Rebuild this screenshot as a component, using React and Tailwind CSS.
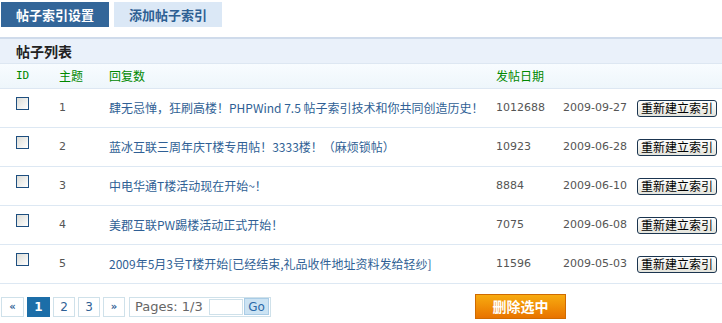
import React from "react";

const rows = [
  { id: 1, title: "肆无忌惮，狂刷高楼！PHPWind 7.5 帖子索引技术和你共同创造历史！", replies: "1012688", date: "2009-09-27" },
  { id: 2, title: "蓝冰互联三周年庆T楼专用帖！3333楼！（麻烦锁帖）", replies: "10923", date: "2009-06-28" },
  { id: 3, title: "中电华通T楼活动现在开始~！", replies: "8884", date: "2009-06-10" },
  { id: 4, title: "美郡互联PW踢楼活动正式开始！", replies: "7075", date: "2009-06-08" },
  { id: 5, title: "2009年5月3号T楼开始[已经结束,礼品收件地址资料发给轻纱]", replies: "11596", date: "2009-05-03" },
];

const font = { fontFamily: '"Noto Sans CJK SC", "DejaVu Sans", sans-serif' };
const num = { fontFamily: '"DejaVu Sans", sans-serif', fontSize: 11 };

export default function App() {
  return (
    <div className="w-[722px] h-[323px] bg-white overflow-hidden text-[12px]" style={font}>
      <div className="flex pt-[2px] pl-[1px] gap-[5px]">
        <div className="w-[108px] h-[25px] bg-[#336699] text-white font-bold text-[13px] flex items-center justify-center">帖子索引设置</div>
        <div className="w-[108px] h-[25px] bg-[#dbe8f6] text-[#2d5f93] font-bold text-[13px] flex items-center justify-center">添加帖子索引</div>
      </div>
      <div className="mt-[10px] border-t-[2px] border-[#cfdbeb] bg-[#eaf1fa] h-[26px] flex items-center pl-[16px] text-[14px] font-bold text-[#222]">帖子列表</div>
      <div className="h-[26px] border-t border-b border-[#dde7f2] bg-gradient-to-b from-[#f8fcff] to-[#eef6fb] grid grid-cols-[59px_50px_387px_226px] items-center text-[#008800] text-[12px]">
        <div className="pl-[16px]" style={{ fontFamily: '"DejaVu Sans Mono", monospace', fontSize: 11 }}>ID</div>
        <div>主题</div>
        <div>回复数</div>
        <div>发帖日期</div>
      </div>
      {rows.map((r) => (
        <div key={r.id} className="h-[39px] border-b border-[#dde8f3] grid grid-cols-[59px_50px_387px_67px_74px_85px] items-center">
          <div className="pl-[16px] self-start pt-[8px]">
            <div className="w-[13px] h-[13px] border border-[#1e4f80] bg-gradient-to-br from-[#dcdcd6] to-white"></div>
          </div>
          <div className="text-[#555]" style={num}>{r.id}</div>
          <div className="text-[#2f5f95] whitespace-nowrap">{r.title}</div>
          <div className="text-[#555]" style={num}>{r.replies}</div>
          <div className="text-[#555]" style={num}>{r.date}</div>
          <div>
            <button className="w-[80px] h-[17px] border border-[#1b3550] rounded-[3px] bg-gradient-to-b from-white to-[#e4e4dc] text-black text-[12px] leading-none flex items-center justify-center">重新建立索引</button>
          </div>
        </div>
      ))}
      <div className="flex items-center mt-[10px]">
        <div className="flex items-center pl-[1px] gap-[3px]" style={{ fontFamily: '"DejaVu Sans", sans-serif' }}>
          <div className="w-[23px] h-[20px] border border-[#cfe1ea] flex items-center justify-center text-[#2f5f95] text-[10px] font-bold">«</div>
          <div className="w-[23px] h-[20px] bg-[#1c6ea8] flex items-center justify-center text-white text-[12px] font-bold">1</div>
          <div className="w-[22px] h-[20px] border border-[#cfe1ea] flex items-center justify-center text-[#2f5f95] text-[12px]">2</div>
          <div className="w-[22px] h-[20px] border border-[#cfe1ea] flex items-center justify-center text-[#2f5f95] text-[12px]">3</div>
          <div className="w-[22px] h-[20px] border border-[#cfe1ea] flex items-center justify-center text-[#2f5f95] text-[10px] font-bold">»</div>
          <div className="ml-[1px] w-[142px] h-[20px] border border-[#cfe1ea] flex items-center pl-[5px] text-[#666] text-[13px]">
            <span className="w-[74px]">Pages: 1/3</span>
            <div className="w-[34px] h-[16px] border border-[#cfe1ea] bg-white"></div>
            <div className="ml-[1px] w-[25px] h-[17px] bg-[#cce3f3] border border-[#a9cce6] text-[#2a6aa8] flex items-center justify-center text-[12px]">Go</div>
          </div>
        </div>
        <button className="ml-[204px] w-[91px] h-[25px] border border-[#d06a00] bg-gradient-to-b from-[#f7ab10] to-[#e87300] text-white font-bold text-[14px] flex items-center justify-center">删除选中</button>
      </div>
    </div>
  );
}
